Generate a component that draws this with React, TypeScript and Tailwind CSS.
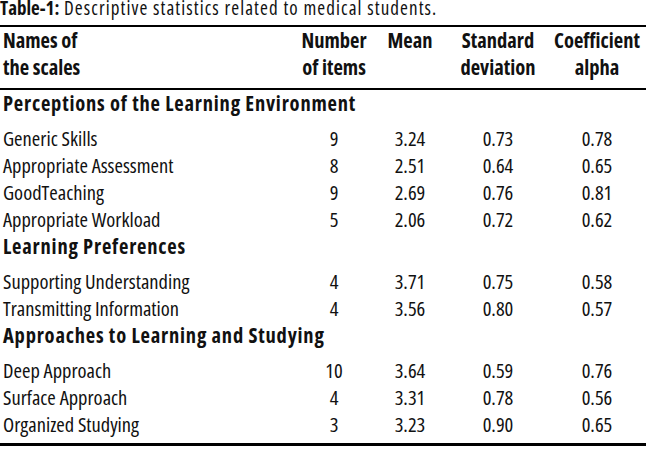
import type { ReactNode } from "react";

type Row =
  | { kind: "section"; label: string }
  | { kind: "item"; label: string; items: string; mean: string; sd: string; alpha: string };

const rows: Row[] = [
  { kind: "section", label: "Perceptions of the Learning Environment" },
  { kind: "item", label: "Generic Skills", items: "9", mean: "3.24", sd: "0.73", alpha: "0.78" },
  { kind: "item", label: "Appropriate Assessment", items: "8", mean: "2.51", sd: "0.64", alpha: "0.65" },
  { kind: "item", label: "GoodTeaching", items: "9", mean: "2.69", sd: "0.76", alpha: "0.81" },
  { kind: "item", label: "Appropriate Workload", items: "5", mean: "2.06", sd: "0.72", alpha: "0.62" },
  { kind: "section", label: "Learning Preferences" },
  { kind: "item", label: "Supporting Understanding", items: "4", mean: "3.71", sd: "0.75", alpha: "0.58" },
  { kind: "item", label: "Transmitting Information", items: "4", mean: "3.56", sd: "0.80", alpha: "0.57" },
  { kind: "section", label: "Approaches to Learning and Studying" },
  { kind: "item", label: "Deep Approach", items: "10", mean: "3.64", sd: "0.59", alpha: "0.76" },
  { kind: "item", label: "Surface Approach", items: "4", mean: "3.31", sd: "0.78", alpha: "0.56" },
  { kind: "item", label: "Organized Studying", items: "3", mean: "3.23", sd: "0.90", alpha: "0.65" },
];

function HeadCell({ children, left = false }: { children: ReactNode; left?: boolean }) {
  return (
    <th
      className={
        left
          ? "whitespace-nowrap pb-[7px] pl-[3px] pt-0 text-left align-top font-bold"
          : "whitespace-nowrap pb-[7px] pt-0 text-center align-top font-bold"
      }
    >
      {children}
    </th>
  );
}

export default function App() {
  return (
    <div className="h-[455px] w-[650px] overflow-hidden bg-white font-['Open_Sans','Roboto',sans-serif] text-[#111] font-stretch-[87%]">
      <div className="h-[25px] w-[646px] whitespace-nowrap text-[19px] leading-[17px] tracking-[1.1px]">
        <span className="font-bold tracking-normal font-stretch-[80%]">Table-1:</span> Descriptive statistics related to medical students.
      </div>

      <table className="w-[646px] table-fixed border-collapse border-t-2 border-b-[3px] border-black text-[20.5px] leading-[27px]">
        <colgroup>
          <col className="w-[296px]" />
          <col className="w-[76px]" />
          <col className="w-[76px]" />
          <col className="w-[100px]" />
          <col className="w-[98px]" />
        </colgroup>
        <thead>
          <tr className="border-b-2 border-black">
            <HeadCell left>
              Names of
              <br />
              the scales
            </HeadCell>
            <HeadCell>
              Number
              <br />
              of items
            </HeadCell>
            <HeadCell>Mean</HeadCell>
            <HeadCell>
              Standard
              <br />
              deviation
            </HeadCell>
            <HeadCell>
              Coefficient
              <br />
              alpha
            </HeadCell>
          </tr>
        </thead>
        <tbody>
          {rows.map((row, i) =>
            row.kind === "section" ? (
              <tr key={row.label}>
                <td colSpan={5} className="h-[35px] whitespace-nowrap p-0 pb-2 pl-[3px] align-top font-bold tracking-[0.8px]">
                  {row.label}
                </td>
              </tr>
            ) : (
              <tr key={row.label}>
                <td className={i === rows.length - 1 ? "whitespace-nowrap p-0 pb-[5px] pl-[3px] align-top" : "whitespace-nowrap p-0 pl-[3px] align-top"}>
                  {row.label}
                </td>
                <td className="p-0 text-center align-top">{row.items}</td>
                <td className="p-0 text-center align-top">{row.mean}</td>
                <td className="p-0 text-center align-top">{row.sd}</td>
                <td className="p-0 text-center align-top">{row.alpha}</td>
              </tr>
            ),
          )}
        </tbody>
      </table>
    </div>
  );
}
